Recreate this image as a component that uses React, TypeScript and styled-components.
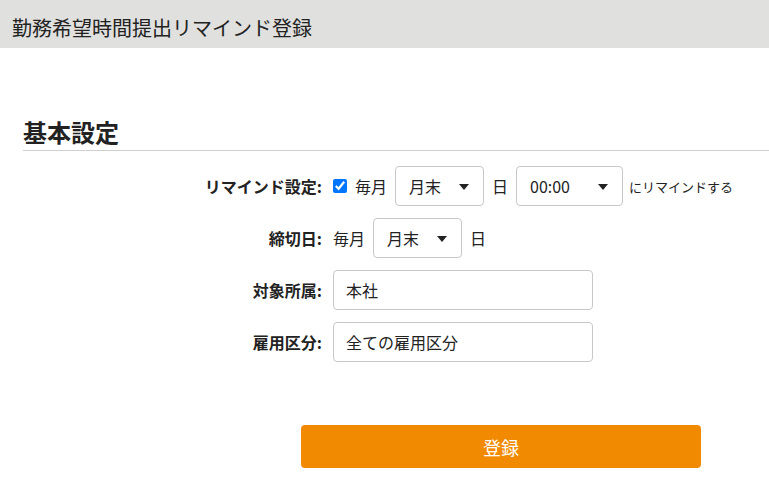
import React from 'react';
import styled, { createGlobalStyle } from 'styled-components';

const GlobalStyle = createGlobalStyle`
  body {
    margin: 0;
    background: #fff;
    color: #222;
    font-family: "Noto Sans CJK JP", "Noto Sans", sans-serif;
  }
`;

const Header = styled.header`
  height: 48px;
  background: #e0e0df;
  display: flex;
  align-items: center;
  padding: 7px 12px 0;
  box-sizing: border-box;
  font-size: 20px;
  color: #222;
`;

const Section = styled.section`
  padding-left: 23px;
`;

const Heading = styled.h2`
  margin: 66px 0 0;
  padding: 3px 0 3px;
  line-height: 30px;
  font-size: 24px;
  font-weight: 700;
  border-bottom: 1px solid #cfcfcf;
`;

const Form = styled.div`
  margin-top: 15px;
  display: grid;
  grid-template-columns: 299px auto;
  grid-auto-rows: 40px;
  column-gap: 11px;
  row-gap: 12px;
  align-items: center;
`;

const Label = styled.label`
  justify-self: end;
  font-size: 16px;
  font-weight: 700;
`;

const Controls = styled.div`
  display: flex;
  align-items: center;
  gap: 8px;
  font-size: 16px;
`;

const Check = styled.input`
  width: 14px;
  height: 14px;
  margin: 0;
  accent-color: #0075ff;
`;

const SelectWrap = styled.div<{ $w: number }>`
  position: relative;
  width: ${(p) => p.$w}px;
  height: 40px;

  &::after {
    content: '';
    position: absolute;
    right: 15px;
    top: 18px;
    border-left: 5px solid transparent;
    border-right: 5px solid transparent;
    border-top: 6px solid #222;
    pointer-events: none;
  }
`;

const Select = styled.select`
  appearance: none;
  width: 100%;
  height: 100%;
  box-sizing: border-box;
  border: 1px solid #c8c8c8;
  border-radius: 4px;
  background: #fff;
  padding: 0 0 0 13px;
  font-family: inherit;
  font-size: 16px;
  color: #222;
`;

const Note = styled.span`
  font-size: 13px;
  margin-left: -2px;
`;

const TextInput = styled.input`
  width: 260px;
  height: 40px;
  box-sizing: border-box;
  border: 1px solid #c8c8c8;
  border-radius: 4px;
  padding: 0 12px;
  font-family: inherit;
  font-size: 16px;
  color: #222;
`;

const ButtonRow = styled.div`
  margin-top: 63px;
  padding-left: 278px;
`;

const SubmitButton = styled.button`
  width: 400px;
  height: 43px;
  border: none;
  border-radius: 4px;
  background: #f28a00;
  color: #fff;
  font-family: inherit;
  font-size: 18px;
`;

export default function App() {
  return (
    <>
      <GlobalStyle />
      <Header>勤務希望時間提出リマインド登録</Header>
      <Section>
        <Heading>基本設定</Heading>
        <Form>
          <Label>リマインド設定:</Label>
          <Controls>
            <Check type="checkbox" defaultChecked />
            <span>毎月</span>
            <SelectWrap $w={89}>
              <Select defaultValue="end">
                <option value="end">月末</option>
              </Select>
            </SelectWrap>
            <span>日</span>
            <SelectWrap $w={107}>
              <Select defaultValue="00:00">
                <option value="00:00">00:00</option>
              </Select>
            </SelectWrap>
            <Note>にリマインドする</Note>
          </Controls>

          <Label>締切日:</Label>
          <Controls>
            <span>毎月</span>
            <SelectWrap $w={89}>
              <Select defaultValue="end">
                <option value="end">月末</option>
              </Select>
            </SelectWrap>
            <span>日</span>
          </Controls>

          <Label>対象所属:</Label>
          <Controls>
            <TextInput defaultValue="本社" />
          </Controls>

          <Label>雇用区分:</Label>
          <Controls>
            <TextInput defaultValue="全ての雇用区分" />
          </Controls>
        </Form>
        <ButtonRow>
          <SubmitButton>登録</SubmitButton>
        </ButtonRow>
      </Section>
    </>
  );
}
